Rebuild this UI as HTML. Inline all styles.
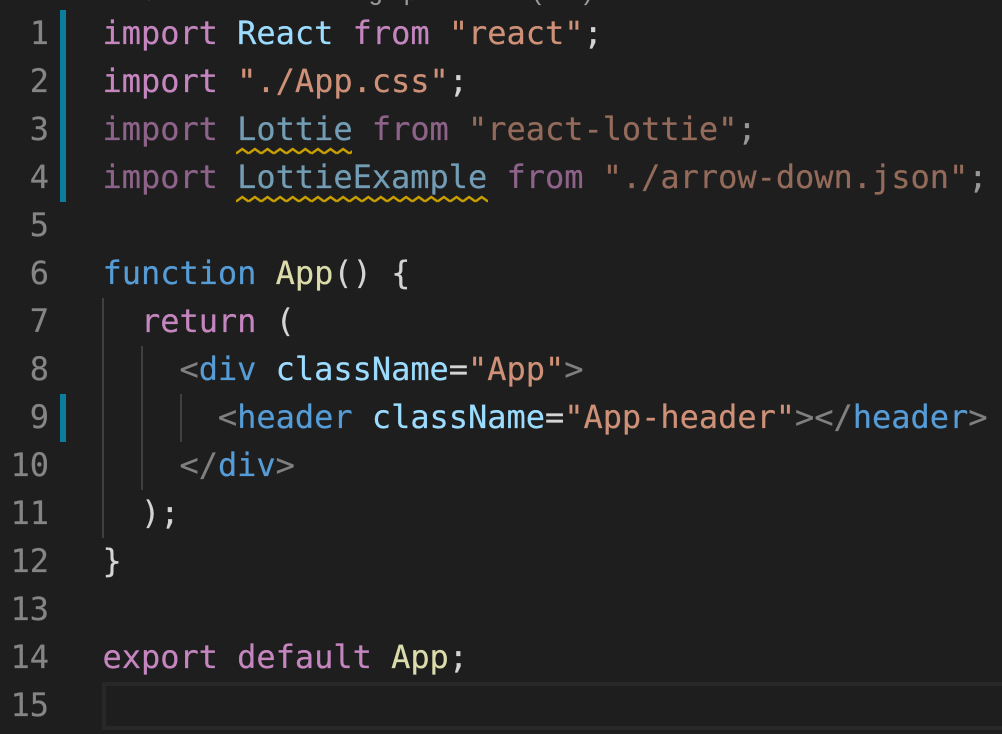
<!DOCTYPE html>
<html lang="en">
<head>
<meta charset="utf-8">
<title>App.js</title>
<style>
html,body{margin:0;padding:0;background:#1e1e1e;}
#e{position:relative;width:1002px;height:734px;overflow:hidden;background:#1e1e1e;font-family:"DejaVu Sans Mono","Liberation Mono",monospace;font-size:32px;line-height:48px;color:#d4d4d4;-webkit-text-stroke:.2px currentColor;}
.l{position:absolute;left:102.5px;white-space:pre;letter-spacing:-.03px;}
.n{position:absolute;left:0;width:49px;text-align:right;color:#858585;}
.b{position:absolute;left:60px;width:6px;background:#0c7d9d;}
.g{position:absolute;background:#404040;}
.k{color:#c586c0}.v{color:#9cdcfe}.s{color:#ce9178}.t{color:#569cd6}.f{color:#dcdcaa}.p{color:#808080}
.d{opacity:.67}
.c{position:absolute;top:-22px;font:24px/30px "Liberation Sans",sans-serif;color:#9a9a9a;}
</style>
</head>
<body>
<div id="e">
<span class="c" style="left:148px">/</span><span class="c" style="left:369px">g</span><span class="c" style="left:404px">p</span><span class="c" style="left:533px">(</span><span class="c" style="left:584px">)</span>

<div class="b" style="top:10px;height:192px"></div>
<div class="b" style="top:394px;height:48px"></div>

<div class="g" style="left:102px;top:298px;width:2px;height:240px"></div>
<div class="g" style="left:141px;top:346px;width:2px;height:144px"></div>
<div class="g" style="left:180px;top:394px;width:2px;height:48px"></div>

<div style="position:absolute;left:102px;top:682px;width:900px;height:40px;border-top:4px solid #282828;border-bottom:4px solid #282828;border-left:4px solid #282828"></div>

<div class="n" style="top:9px">1</div>
<div class="n" style="top:57px">2</div>
<div class="n" style="top:105px">3</div>
<div class="n" style="top:153px">4</div>
<div class="n" style="top:201px">5</div>
<div class="n" style="top:249px">6</div>
<div class="n" style="top:297px">7</div>
<div class="n" style="top:345px">8</div>
<div class="n" style="top:393px">9</div>
<div class="n" style="top:441px">10</div>
<div class="n" style="top:489px">11</div>
<div class="n" style="top:537px">12</div>
<div class="n" style="top:585px">13</div>
<div class="n" style="top:633px">14</div>
<div class="n" style="top:681px">15</div>

<div class="l" style="top:9px"><span class="k">import</span> <span class="v">React</span> <span class="k">from</span> <span class="s">"react"</span>;</div>
<div class="l" style="top:57px"><span class="k">import</span> <span class="s">"./App.css"</span>;</div>
<div class="l d" style="top:105px"><span class="k">import</span> <span class="v">Lottie</span> <span class="k">from</span> <span class="s">"react-lottie"</span>;</div>
<div class="l d" style="top:153px"><span class="k">import</span> <span class="v">LottieExample</span> <span class="k">from</span> <span class="s">"./arrow-down.json"</span>;</div>
<div class="l" style="top:249px"><span class="t">function</span> <span class="f">App</span>() {</div>
<div class="l" style="top:297px">  <span class="k">return</span> (</div>
<div class="l" style="top:345px">    <span class="p">&lt;</span><span class="t">div</span> <span class="v">className</span>=<span class="s">"App"</span><span class="p">&gt;</span></div>
<div class="l" style="top:393px">      <span class="p">&lt;</span><span class="t">header</span> <span class="v">className</span>=<span class="s">"App-header"</span><span class="p">&gt;&lt;/</span><span class="t">header</span><span class="p">&gt;</span></div>
<div class="l" style="top:441px">    <span class="p">&lt;/</span><span class="t">div</span><span class="p">&gt;</span></div>
<div class="l" style="top:489px">  );</div>
<div class="l" style="top:537px">}</div>
<div class="l" style="top:633px"><span class="k">export</span> <span class="k">default</span> <span class="f">App</span>;</div>

<svg width="1002" height="734" style="position:absolute;left:0;top:0" fill="none" stroke="#c9a000" stroke-width="2.4">
<defs>
<pattern id="w" x="236" y="0" width="12.6" height="734" patternUnits="userSpaceOnUse">
<path d="M0 153.5L6.3 149L12.6 153.5M0 201.5L6.3 197L12.6 201.5"/>
</pattern>
</defs>
<rect x="236" y="146" width="116" height="10" fill="url(#w)" stroke="none"/>
<rect x="236" y="194" width="252" height="10" fill="url(#w)" stroke="none"/>
</svg>
</div>
</body>
</html>
